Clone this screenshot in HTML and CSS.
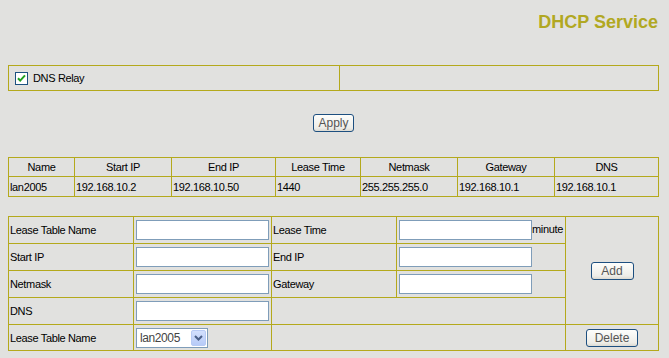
FILE: index.html
```html
<!DOCTYPE html>
<html lang="en">

<head>
    <meta charset="UTF-8">
    <meta name="viewport" content="width=device-width, initial-scale=1.0">
    <title>DHCP Service</title>
    <link rel="stylesheet" href="styles.css">
</head>

<body>
    <div class="page">
        <h1 class="page-title">DHCP Service</h1>

        <!-- relay switch -->
        <table class="grid relay-table">
            <tr>
                <td class="relay-cell">
                    <div class="relay-label">
                        <span class="check">
                            <svg width="13" height="13" viewBox="0 0 13 13">
                                <rect x="0.5" y="0.5" width="12" height="12" fill="#fff" stroke="#1c5180" />
                                <path d="M3 6.2 L5.2 8.6 L10 3.4" fill="none" stroke="#21a121" stroke-width="2" />
                            </svg>
                        </span>
                        <span>DNS Relay</span>
                    </div>
                </td>
                <td class="relay-empty"></td>
            </tr>
        </table>

        <div class="apply-row">
            <button class="btn btn-apply">Apply</button>
        </div>

        <!-- current lease tables -->
        <table class="grid lease-list">
            <tr>
                <th class="c-name">Name</th>
                <th class="c-start">Start IP</th>
                <th class="c-end">End IP</th>
                <th class="c-time">Lease Time</th>
                <th class="c-mask">Netmask</th>
                <th class="c-gw">Gateway</th>
                <th class="c-dns">DNS</th>
            </tr>
            <tr>
                <td>lan2005</td>
                <td>192.168.10.2</td>
                <td>192.168.10.50</td>
                <td>1440</td>
                <td>255.255.255.0</td>
                <td>192.168.10.1</td>
                <td>192.168.10.1</td>
            </tr>
        </table>

        <!-- edit form -->
        <table class="grid lease-form">
            <tr>
                <td class="f-label">Lease Table Name</td>
                <td class="f-field"><input type="text" class="txt"></td>
                <td class="f-label2">Lease Time</td>
                <td class="f-field2"><input type="text" class="txt">minute</td>
                <td class="f-action" rowspan="4"><button class="btn btn-add">Add</button></td>
            </tr>
            <tr>
                <td>Start IP</td>
                <td><input type="text" class="txt"></td>
                <td>End IP</td>
                <td><input type="text" class="txt"></td>
            </tr>
            <tr>
                <td>Netmask</td>
                <td><input type="text" class="txt"></td>
                <td>Gateway</td>
                <td><input type="text" class="txt"></td>
            </tr>
            <tr>
                <td>DNS</td>
                <td><input type="text" class="txt"></td>
                <td colspan="2"></td>
            </tr>
            <tr class="last-row">
                <td>Lease Table Name</td>
                <td>
                    <div class="select-box">
                        <select class="select">
                            <option>lan2005</option>
                        </select>
                        <span class="select-arrow">
                            <svg width="9" height="6" viewBox="0 0 9 6">
                                <path d="M1 1 L4.5 4.5 L8 1" fill="none" stroke="#4a5f87" stroke-width="2" />
                            </svg>
                        </span>
                    </div>
                </td>
                <td colspan="2"></td>
                <td class="f-action"><button class="btn btn-delete">Delete</button></td>
            </tr>
        </table>
    </div>
</body>

</html>
```

FILE: styles.css
```css
* {
    box-sizing: border-box;
}

body {
    margin: 0;
    background-color: #e1e1df;
    font-family: "Liberation Sans", Arial, sans-serif;
    font-size: 11px;
    letter-spacing: -0.35px;
    color: #000;
}

.page {
    width: 669px;
    padding: 12px 10px 0 8px;
}

.page-title {
    margin: 0;
    height: 20px;
    line-height: 20px;
    padding-right: 1px;
    font-size: 18px;
    font-weight: bold;
    letter-spacing: 0;
    text-align: right;
    color: #b1a822;
}

/* shared table look */
.grid {
    width: 651px;
    table-layout: fixed;
    border-collapse: separate;
    border-spacing: 0;
    border-top: 1px solid #b4a91c;
    border-left: 1px solid #b4a91c;
}

.grid td,
.grid th {
    border-right: 1px solid #b4a91c;
    border-bottom: 1px solid #b4a91c;
    padding: 0 1px;
    font-weight: normal;
    text-align: left;
    vertical-align: middle;
    white-space: nowrap;
}

/* relay */
.relay-table {
    margin-top: 33px;
}

.relay-table td {
    height: 25px;
}

.relay-cell {
    width: 331px;
}

.grid .relay-cell {
    padding-left: 6px;
}

.relay-empty {
    width: 319px;
}

.relay-label {
    display: flex;
    align-items: center;
    gap: 5px;
}

.check {
    display: flex;
    width: 13px;
    height: 13px;
}

/* buttons */
.apply-row {
    width: 651px;
    display: flex;
    justify-content: center;
    margin: 23px 0 25px;
}

.btn {
    height: 18px;
    padding: 0;
    border: 1px solid #1d4f80;
    border-radius: 3px;
    background: linear-gradient(#fdfdfb, #eeede8 80%, #dcdad2);
    color: #555;
    font-family: "Liberation Sans", Arial, sans-serif;
    font-size: 12px;
    letter-spacing: 0;
    line-height: 16px;
    vertical-align: middle;
}

.btn-apply {
    width: 41px;
}

.btn-add {
    width: 43px;
}

.btn-delete {
    width: 52px;
}

/* lease list */
.lease-list {
    margin-bottom: 19px;
}

.lease-list th {
    height: 19px;
}

.grid.lease-list th {
    text-align: center;
}

.lease-list td {
    height: 20px;
}

.c-name { width: 66px; }
.c-start { width: 97px; }
.c-end { width: 104px; }
.c-time { width: 85px; }
.c-mask { width: 97px; }
.c-gw { width: 97px; }
.c-dns { width: 104px; }

/* form */
.lease-form td {
    height: 27px;
}

.lease-form .last-row td {
    height: 26px;
}

.f-label { width: 125px; }
.f-field { width: 138px; }
.f-label2 { width: 125px; }
.f-field2 { width: 169px; }

.grid .f-action {
    width: 93px;
    text-align: center;
}

.txt {
    width: 133px;
    height: 20px;
    margin: 0 0 0 1px;
    padding: 0 2px;
    border: 1px solid #7f9db9;
    background-color: #fff;
    vertical-align: middle;
    font-family: "Liberation Sans", Arial, sans-serif;
    font-size: 11px;
}

.select-box {
    display: flex;
    align-items: center;
    width: 72px;
    height: 20px;
    margin-left: 1px;
    border: 1px solid #7f9db9;
    background-color: #fff;
}

.select {
    flex: 1;
    min-width: 0;
    height: 18px;
    padding: 0 0 0 3px;
    border: none;
    outline: none;
    background: transparent;
    appearance: none;
    color: #444;
    font-family: "Liberation Sans", Arial, sans-serif;
    font-size: 12px;
    letter-spacing: -0.4px;
}

.select-arrow {
    display: flex;
    align-items: center;
    justify-content: center;
    width: 15px;
    height: 16px;
    margin-right: 1px;
    border: 1px solid #b8cbf5;
    border-radius: 2px;
    background: linear-gradient(#d3e0fd, #b7cbf7);
}
```
